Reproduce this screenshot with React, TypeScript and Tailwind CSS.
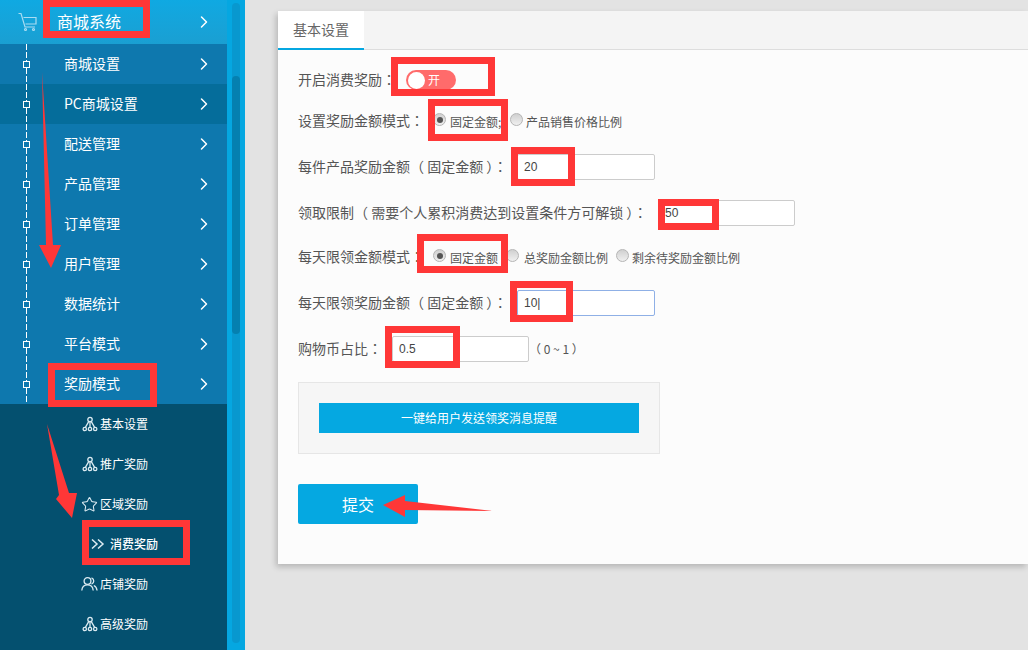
import { ChevronRight, Star } from "lucide-react";

const menus = ["商城设置", "PC商城设置", "配送管理", "产品管理", "订单管理", "用户管理", "数据统计", "平台模式", "奖励模式"];

function CartIcon() {
  return (
    <svg width="20" height="20" viewBox="0 0 20 20" fill="none" stroke="#a9dcf2" strokeWidth="1.2">
      <path d="M0.5 1.5h2.5l4 13.5h10" />
      <path d="M5.5 5.5h12.5v6.5H7.5" />
      <circle cx="7.5" cy="17.5" r="1" />
      <circle cx="15.5" cy="17.5" r="1" />
    </svg>
  );
}

function TreeIcon() {
  return (
    <svg width="16" height="16" viewBox="0 0 16 16" fill="none" stroke="#dcebf2" strokeWidth="1.3">
      <circle cx="8" cy="3.5" r="2.2" />
      <circle cx="2.8" cy="13" r="1.7" />
      <circle cx="8" cy="13" r="1.7" />
      <circle cx="13.2" cy="13" r="1.7" />
      <path d="M8 5.7v5.6M6.8 5.4 3.4 11.4M9.2 5.4l3.4 6" />
    </svg>
  );
}

function DoubleChevron() {
  return (
    <svg width="14" height="10" viewBox="0 0 14 10" fill="none" stroke="#dcebf2" strokeWidth="1.5">
      <path d="M1 0.5 6 5l-5 4.5M7 0.5 12 5l-5 4.5" />
    </svg>
  );
}

function PeopleIcon() {
  return (
    <svg width="17" height="16" viewBox="0 0 17 16" fill="none" stroke="#dcebf2" strokeWidth="1.3">
      <circle cx="6.5" cy="5" r="3.4" />
      <path d="M0.8 14.5c0.3-3.6 2.6-5.6 5.7-5.6s5.4 2 5.7 5.6" />
      <path d="M10.5 1.8a3.4 3.4 0 0 1 0 6.4M12.8 9.5c1.8 0.8 3 2.6 3.3 5" />
    </svg>
  );
}

function Radio({ checked }: { checked?: boolean }) {
  return (
    <span className="mb-[3px] flex h-[13px] w-[13px] items-center justify-center rounded-full border border-[#b5b5b5] bg-gradient-to-b from-[#d0d0d0] to-[#f0f0f0]">
      {checked ? <span className="h-[6px] w-[6px] rounded-full bg-[#555]" /> : null}
    </span>
  );
}

function Sidebar() {
  return (
    <aside className="flex h-full w-[245px] shrink-0 bg-[#05a7e1]">
      <div className="h-full w-[227px] bg-[#04506f] text-white">
        <div className="flex h-[44px] items-center bg-gradient-to-b from-[#0fa9e2] to-[#1a9fd2] pr-[13px]">
          <span className="ml-[18px] w-[39px]">
            <CartIcon />
          </span>
          <span className="flex-1 pb-[3px] text-base">商城系统</span>
          <ChevronRight size={20} strokeWidth={1.8} />
        </div>
        <div className="relative">
          <div className="absolute bottom-0 left-[26px] top-0 z-10 w-px bg-[repeating-linear-gradient(to_bottom,white_0,white_6px,transparent_6px,transparent_8px)]" />
          {menus.map((name) => (
            <div
              key={name}
              className={`relative flex h-10 items-center pr-[13px] text-sm ${name === "PC商城设置" ? "bg-[#056d9b]" : "bg-[#0e78ae]"}`}
            >
              <span className="relative z-20 ml-[23px] h-[7px] w-[7px] border border-white bg-inherit" />
              <span className="ml-[34px] flex-1 pb-[2px]">{name}</span>
              <ChevronRight size={20} strokeWidth={1.8} />
            </div>
          ))}
        </div>
        <div className="text-xs">
          <div className="flex h-10 items-center gap-[2px] pl-[82px]">
            <TreeIcon />
            基本设置
          </div>
          <div className="flex h-10 items-center gap-[2px] pl-[82px]">
            <TreeIcon />
            推广奖励
          </div>
          <div className="flex h-10 items-center gap-[2px] pl-[81px]">
            <Star size={17} strokeWidth={1.5} color="#dcebf2" />
            区域奖励
          </div>
          <div className="flex h-10 items-center pl-[91px]">
            <DoubleChevron />
            <span className="ml-[5px] font-medium">消费奖励</span>
          </div>
          <div className="flex h-10 items-center gap-[2px] pl-[81px]">
            <PeopleIcon />
            店铺奖励
          </div>
          <div className="flex h-10 items-center gap-[2px] pl-[82px]">
            <TreeIcon />
            高级奖励
          </div>
        </div>
      </div>
      <div className="ml-[5px] mt-[3px] flex h-[640px] w-2 flex-col rounded-full bg-[#0898cf]">
        <div className="mt-[73px] h-[258px] rounded-full bg-[#0580b0]" />
      </div>
    </aside>
  );
}

function Form() {
  return (
    <main className="ml-[33px] mt-[11px] h-[553px] flex-1 bg-[#fcfcfc] text-sm text-[#555] shadow-[-2px_3px_6px_rgba(0,0,0,0.2)]">
      <div className="h-[39px] border-b border-[#ddd] bg-[#f4f4f4]">
        <div className="flex h-[39px] w-[86px] items-center justify-center border-b-2 border-[#05a7e1] bg-white pb-[2px] text-sm text-[#666]">
          基本设置
        </div>
      </div>
      <div className="px-5 pt-[17px] font-['Noto_Sans_CJK_TC','Liberation_Sans',sans-serif]">
        <div className="flex h-[26px] items-center">
          <span className="pb-[2px]">开启消费奖励：</span>
          <span className="ml-[10px] flex h-[20px] w-[50px] items-center rounded-full bg-[#ff6b6b] pl-[2px] text-xs text-white">
            <span className="h-[17px] w-[17px] rounded-full bg-white" />
            <span className="ml-[3px]">开</span>
          </span>
        </div>
        <div className="mt-[15px] flex h-[26px] items-center text-xs">
          <span className="w-[136px] pb-[2px] text-sm">设置奖励金额模式：</span>
          <span className="ml-[-1px] flex w-[71px] items-center gap-[4px]">
            <Radio checked />
            <span className="pt-[2px]">固定金额;</span>
          </span>
          <span className="ml-[6px] flex items-center gap-[3px]">
            <Radio />
            <span className="pt-[2px]">产品销售价格比例</span>
          </span>
        </div>
        <div className="mt-5 flex h-[26px] items-center">
          <span className="w-[219px] pb-[2px]">每件产品奖励金额（ 固定金额 ）：</span>
          <input
            readOnly
            value="20"
            className="h-[26px] w-[138px] rounded-[2px] border border-[#ccc] bg-white px-[6px] font-['Liberation_Sans',sans-serif] text-xs text-[#444] outline-none"
          />
        </div>
        <div className="mt-5 flex h-[26px] items-center">
          <span className="w-[366px] pb-[2px]">领取限制（ 需要个人累积消费达到设置条件方可解锁 ）：</span>
          <input
            readOnly
            value="50"
            className="h-[26px] w-[131px] rounded-[2px] border border-[#ccc] bg-white px-0 font-['Liberation_Sans',sans-serif] text-xs text-[#444] outline-none"
          />
        </div>
        <div className="mt-[18px] flex h-[26px] items-center text-xs">
          <span className="w-[135px] pb-[2px] text-sm">每天限领金额模式：</span>
          <span className="flex w-[73px] items-center gap-[4px]">
            <Radio checked />
            <span className="pt-[2px]">固定金额</span>
          </span>
          <span className="flex w-[110px] items-center gap-[5px]">
            <Radio />
            <span className="pt-[2px]">总奖励金额比例</span>
          </span>
          <span className="flex items-center gap-[3px]">
            <Radio />
            <span className="pt-[2px]">剩余待奖励金额比例</span>
          </span>
        </div>
        <div className="mt-5 flex h-[26px] items-center">
          <span className="w-[219px] pb-[2px]">每天限领奖励金额（ 固定金额 ）：</span>
          <input
            readOnly
            value="10|"
            className="h-[26px] w-[138px] rounded-[2px] border border-[#8fb0e6] bg-white px-[6px] font-['Liberation_Sans',sans-serif] text-xs text-[#444] outline-none"
          />
        </div>
        <div className="mt-5 flex h-[26px] items-center">
          <span className="w-[94px] pb-[2px]">购物币占比：</span>
          <input
            readOnly
            value="0.5"
            className="h-[26px] w-[137px] rounded-[2px] border border-[#ccc] bg-white px-[6px] font-['Liberation_Sans',sans-serif] text-xs text-[#444] outline-none"
          />
          <span className="pb-[1px] text-xs">（ 0 ~ 1 ）</span>
        </div>
        <div className="mt-5 h-[72px] w-[362px] border border-[#e6e6e6] bg-[#f6f6f6] pl-5 pt-5">
          <button className="h-[30px] w-[320px] bg-[#05a8e1] text-xs text-white">一键给用户发送领奖消息提醒</button>
        </div>
        <button className="mt-[30px] h-10 w-[120px] rounded-[2px] bg-[#05a8e1] text-base text-white">提交</button>
      </div>
    </main>
  );
}

function Annotations() {
  return (
    <div className="pointer-events-none absolute inset-0 z-30">
      <svg width="1028" height="650" viewBox="0 0 1028 650" fill="#ff3737" className="absolute left-0 top-0">
        <polygon points="42,72 53,245 61,245 51,268 39,245 46,245" />
        <polygon points="47,424 69,493 77,493 72,518 56,499 59,495" />
        <polygon points="383,505 405,495 405,501 493,511 405,510 405,517" />
      </svg>
      <div className="absolute left-[43px] top-0 h-[38px] w-[107px] border-[7px] border-[#ff3737]" />
      <div className="absolute left-[48px] top-[363px] h-[44px] w-[109px] border-[7px] border-[#ff3737]" />
      <div className="absolute left-[82px] top-[520px] h-[45px] w-[108px] border-[7px] border-[#ff3737]" />
      <div className="absolute left-[391px] top-[57px] h-[39px] w-[104px] border-[7px] border-[#ff3737]" />
      <div className="absolute left-[428px] top-[99px] h-[42px] w-[80px] border-[7px] border-[#ff3737]" />
      <div className="absolute left-[511px] top-[147px] h-[39px] w-[64px] border-[7px] border-[#ff3737]" />
      <div className="absolute left-[658px] top-[199px] h-[31px] w-[61px] border-[7px] border-[#ff3737]" />
      <div className="absolute left-[417px] top-[234px] h-[39px] w-[91px] border-[7px] border-[#ff3737]" />
      <div className="absolute left-[510px] top-[281px] h-[41px] w-[63px] border-[7px] border-[#ff3737]" />
      <div className="absolute left-[385px] top-[326px] h-[42px] w-[75px] border-[7px] border-[#ff3737]" />
    </div>
  );
}

export default function App() {
  return (
    <div className="relative flex h-[650px] w-[1028px] overflow-hidden bg-[#e3e3e3] font-['Noto_Sans_CJK_SC','Liberation_Sans',sans-serif]">
      <Sidebar />
      <Form />
      <Annotations />
    </div>
  );
}
